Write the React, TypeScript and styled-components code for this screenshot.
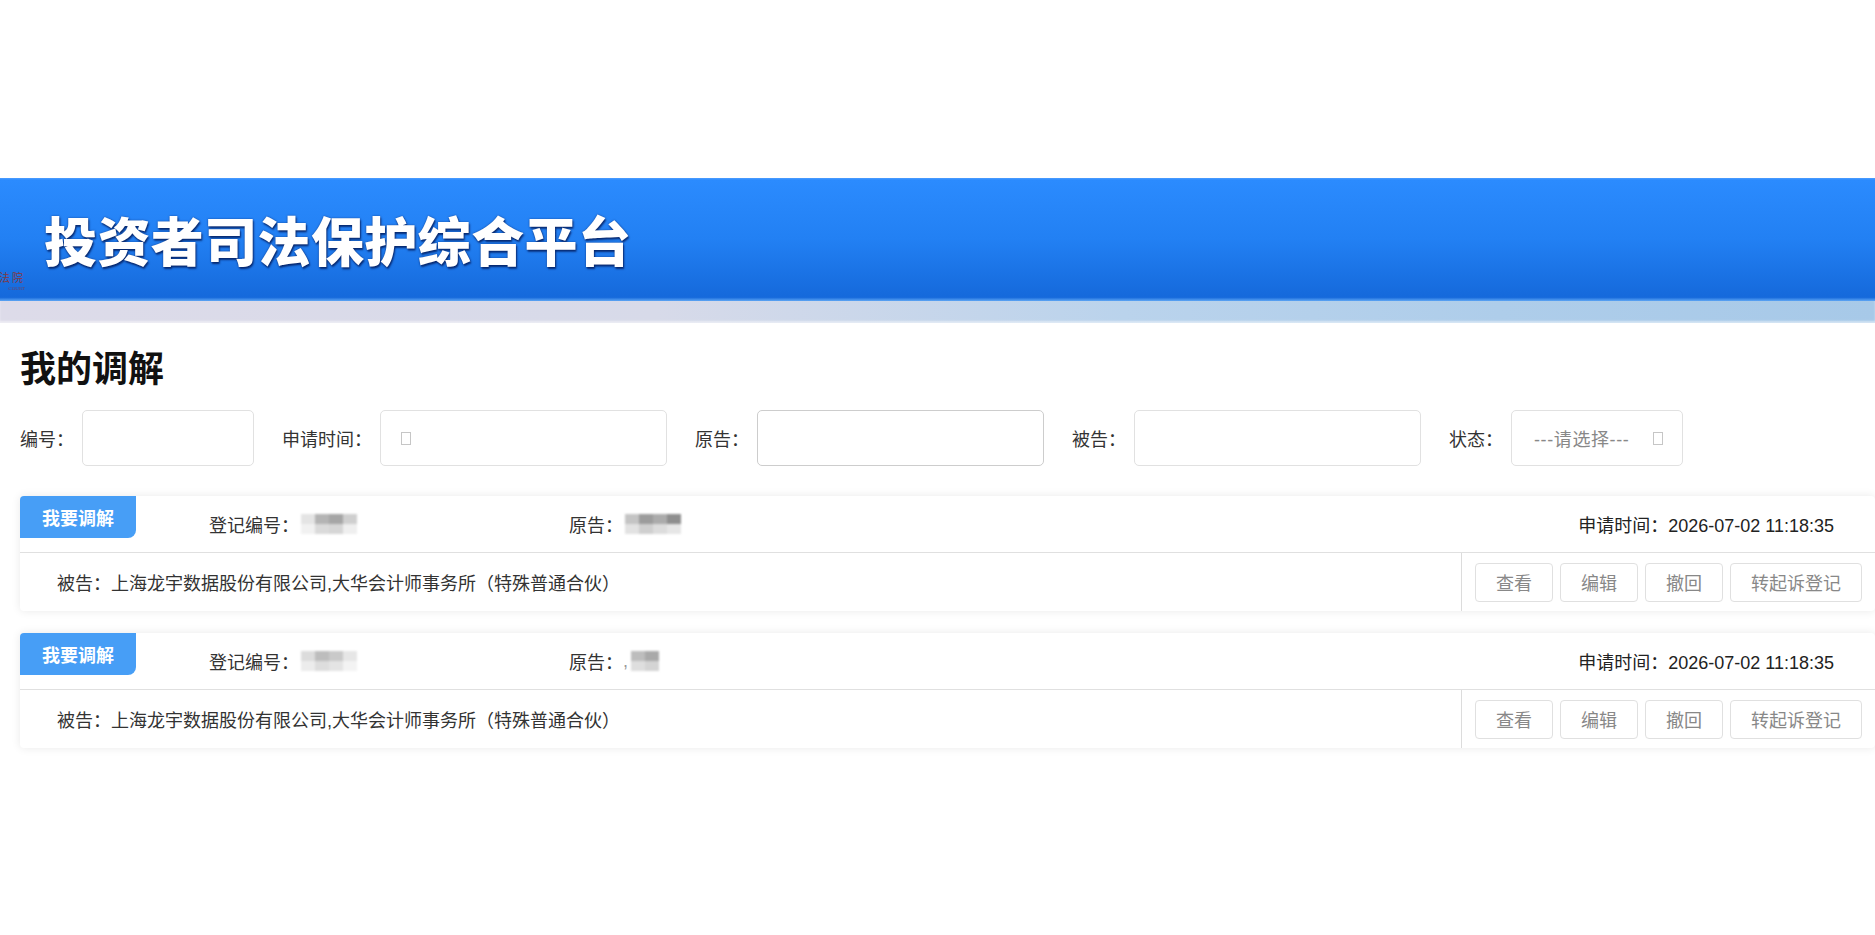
import styled, { createGlobalStyle } from "styled-components";

const GlobalStyle = createGlobalStyle`
  html, body {
    margin: 0;
    padding: 0;
    background: #fff;
  }
  body {
    font-family: "Liberation Sans", "Noto Sans CJK SC", sans-serif;
    color: #333;
    overflow: hidden;
  }
`;

interface Record {
    id: number;
    codeBlur: string[][];
    plaintiffPrefix?: string;
    plaintiffBlur: string[][];
    time: string;
    defendant: string;
}

const records: Record[] = [
    {
        id: 1,
        codeBlur: [
            ["#e4e4e4", "#b4b4b4", "#a6a6a6", "#cfcfcf"],
            ["#f1f1f1", "#dadada", "#d6d6d6", "#efefef"],
        ],
        plaintiffBlur: [
            ["#c4c4c4", "#9c9c9c", "#ababab", "#8e8e8e"],
            ["#e2e2e2", "#cfcfcf", "#dcdcdc", "#e6e6e6"],
        ],
        time: "2026-07-02 11:18:35",
        defendant: "上海龙宇数据股份有限公司,大华会计师事务所（特殊普通合伙）",
    },
    {
        id: 2,
        codeBlur: [
            ["#dcdcdc", "#bdbdbd", "#c9c9c9", "#e6e6e6"],
            ["#ececec", "#dddddd", "#e4e4e4", "#f3f3f3"],
        ],
        plaintiffPrefix: ",",
        plaintiffBlur: [
            ["#bdbdbd", "#a9a9a9"],
            ["#dedede", "#d4d4d4"],
        ],
        time: "2026-07-02 11:18:35",
        defendant: "上海龙宇数据股份有限公司,大华会计师事务所（特殊普通合伙）",
    },
];

const actions = ["查看", "编辑", "撤回", "转起诉登记"];

const Mosaic = ({ rows }: { rows: string[][] }) => (
    <MosaicGrid $cols={rows[0].length}>
        {rows.flat().map((c, i) => (
            <MosaicCell key={i} style={{ background: c }} />
        ))}
    </MosaicGrid>
);

export default function App() {
    return (
        <Page>
            <GlobalStyle />
            <Banner>
                <Logo>
                    <LogoName>法院</LogoName>
                    <LogoSub>COURT</LogoSub>
                </Logo>
                <BannerTitle>投资者司法保护综合平台</BannerTitle>
            </Banner>
            <Strip />

            <Content>
                <PageTitle>我的调解</PageTitle>

                <FilterBar>
                    <FilterItem>
                        编号：
                        <InputBox $w={172}>
                            <PlainInput />
                        </InputBox>
                    </FilterItem>
                    <FilterItem>
                        申请时间：
                        <InputBox $w={287}>
                            <Tofu />
                            <PlainInput />
                        </InputBox>
                    </FilterItem>
                    <FilterItem>
                        原告：
                        <InputBox $w={287} $dark>
                            <PlainInput />
                        </InputBox>
                    </FilterItem>
                    <FilterItem>
                        被告：
                        <InputBox $w={287}>
                            <PlainInput />
                        </InputBox>
                    </FilterItem>
                    <FilterItem>
                        状态：
                        <SelectBox>
                            <SelectText>---请选择---</SelectText>
                            <Tofu />
                        </SelectBox>
                    </FilterItem>
                </FilterBar>

                <CardList>
                    {records.map((r) => (
                        <Card key={r.id}>
                            <CardHead>
                                <Badge>我要调解</Badge>
                                <Field $w={360}>
                                    登记编号：
                                    <Mosaic rows={r.codeBlur} />
                                </Field>
                                <Field>
                                    原告：
                                    {r.plaintiffPrefix && <Faint>{r.plaintiffPrefix}</Faint>}
                                    <Mosaic rows={r.plaintiffBlur} />
                                </Field>
                                <DateField>申请时间：{r.time}</DateField>
                            </CardHead>
                            <CardBody>
                                <Defendant>被告：{r.defendant}</Defendant>
                                <Actions>
                                    {actions.map((a) => (
                                        <ActionButton key={a}>{a}</ActionButton>
                                    ))}
                                </Actions>
                            </CardBody>
                        </Card>
                    ))}
                </CardList>
            </Content>
        </Page>
    );
}

const Page = styled.div`
    padding-top: 178px;
    width: 1875px;
`;

const Banner = styled.div`
    height: 123px;
    display: flex;
    align-items: center;
    overflow: hidden;
    background: linear-gradient(180deg, #4d9dff 0px, #2b8bfe 2px, #2280f3 50%, #1569db 97%, #5ea6f4 100%);
`;

const Logo = styled.div`
    width: 25px;
    align-self: flex-end;
    margin-bottom: 8px;
    display: flex;
    flex-direction: column;
    align-items: flex-end;
    white-space: nowrap;
    color: #7e3a48;
    font-family: "Liberation Serif", "Noto Sans CJK SC", serif;
`;

const LogoName = styled.span`
    font-size: 11px;
    line-height: 14px;
    letter-spacing: 2px;
`;

const LogoSub = styled.span`
    font-size: 5px;
    line-height: 8px;
    opacity: 0.8;
`;

const BannerTitle = styled.div`
    margin-left: 19px;
    font-family: "Noto Sans CJK SC", sans-serif;
    font-size: 53px;
    font-weight: 900;
    color: #fff;
    letter-spacing: 0.4px;
    text-shadow: 1px 2px 2px rgba(0, 20, 80, 0.75), 0 0 2px rgba(0, 20, 80, 0.6);
    line-height: 1;
`;

const Strip = styled.div`
    height: 22px;
    background: linear-gradient(90deg, #dddbe9 0%, #d7dae9 35%, #bad3ec 60%, #aecdea 80%, #a7c9e8 100%);
    box-shadow: inset 0 -2px 2px rgba(255, 255, 255, 0.5);
`;

const Content = styled.div`
    padding: 0 0 40px 20px;
`;

const PageTitle = styled.h1`
    margin: 25px 0 0;
    font-family: "Noto Sans CJK SC", sans-serif;
    font-size: 36px;
    line-height: 36px;
    font-weight: 700;
    color: #111;
`;

const FilterBar = styled.div`
    display: flex;
    align-items: center;
    gap: 28px;
    margin-top: 26px;
`;

const FilterItem = styled.label`
    display: flex;
    align-items: center;
    gap: 8px;
    font-size: 18px;
    color: #333;
`;

const InputBox = styled.div<{ $w: number; $dark?: boolean }>`
    width: ${(p) => p.$w}px;
    height: 56px;
    box-sizing: border-box;
    display: flex;
    align-items: center;
    gap: 10px;
    padding: 0 14px 0 20px;
    border: 1px solid ${(p) => (p.$dark ? "#cdcdcd" : "#e1e1e1")};
    border-radius: 5px;
    background: #fff;
`;

const PlainInput = styled.input`
    flex: 1;
    min-width: 0;
    border: none;
    outline: none;
    background: transparent;
    font-size: 18px;
    font-family: inherit;
`;

const Tofu = styled.span`
    display: inline-block;
    width: 8px;
    height: 11px;
    border: 1px solid #c6c6c6;
    flex-shrink: 0;
`;

const SelectBox = styled.div`
    width: 172px;
    height: 56px;
    box-sizing: border-box;
    display: flex;
    align-items: center;
    justify-content: space-between;
    padding: 0 19px 0 22px;
    border: 1px solid #e1e1e1;
    border-radius: 5px;
    background: #fff;
`;

const SelectText = styled.span`
    font-size: 18px;
    color: #888;
    letter-spacing: 0.6px;
`;

const CardList = styled.div`
    display: flex;
    flex-direction: column;
    gap: 22px;
    margin-top: 30px;
`;

const Card = styled.div`
    background: #fff;
    border-radius: 4px;
    box-shadow: 0 0 10px rgba(0, 0, 0, 0.09);
`;

const CardHead = styled.div`
    height: 56px;
    display: flex;
    align-items: center;
    border-bottom: 1px solid #e0e0e0;
    font-size: 18px;
    color: #333;
`;

const Badge = styled.div`
    align-self: flex-start;
    width: 116px;
    height: 42px;
    margin-right: 73px;
    display: flex;
    align-items: center;
    justify-content: center;
    background: #479ef6;
    color: #fff;
    font-size: 18px;
    font-weight: 600;
    border-radius: 4px 0 8px 0;
`;

const Field = styled.div<{ $w?: number }>`
    display: flex;
    align-items: center;
    width: ${(p) => (p.$w ? `${p.$w}px` : "auto")};
`;

const Faint = styled.span`
    color: #999;
    margin-right: 1px;
`;

const MosaicGrid = styled.span<{ $cols: number }>`
    display: inline-grid;
    grid-template-columns: repeat(${(p) => p.$cols}, 14px);
    grid-auto-rows: 10px;
    margin-left: 2px;
    filter: blur(1.2px);
`;

const MosaicCell = styled.span`
    display: block;
`;

const DateField = styled.div`
    margin-left: auto;
    padding-right: 41px;
    color: #222;
`;

const CardBody = styled.div`
    height: 58px;
    display: flex;
    align-items: stretch;
`;

const Defendant = styled.div`
    flex: 1;
    display: flex;
    align-items: center;
    padding-left: 37px;
    font-size: 18px;
    color: #333;
`;

const Actions = styled.div`
    display: flex;
    align-items: center;
    gap: 7px;
    padding: 0 13px;
    border-left: 1px solid #dcdcdc;
`;

const ActionButton = styled.button`
    height: 39px;
    padding: 0 20px;
    border: 1px solid #e0e0e0;
    border-radius: 4px;
    background: #fff;
    color: #888;
    font-size: 18px;
    font-family: inherit;
    cursor: pointer;
`;
